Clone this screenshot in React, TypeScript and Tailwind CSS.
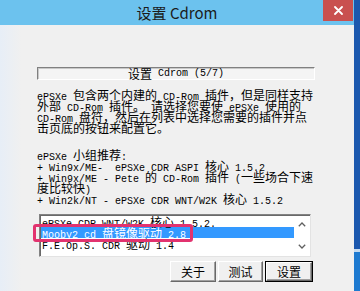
import React from 'react';

const cjk = "font-['Noto_Sans_CJK_SC',sans-serif]";
const mono = "font-['Liberation_Mono','Noto_Sans_CJK_SC',monospace]";

// SimSun-like mix: half-width latin (6px) next to full-width hanzi (12px)
function Mixed({ text }: { text: string }) {
  const parts = text.split(/([ -~]+)/).filter(Boolean);
  return (
    <>
      {parts.map((p, i) =>
        /^[ -~]+$/.test(p) ? (
          <span key={i} className={`${mono} text-[10px]`}>
            {p}
          </span>
        ) : (
          <span key={i} className={`${cjk} text-[12px]`}>
            {p}
          </span>
        )
      )}
    </>
  );
}

const intro = [
  'ePSXe 包含两个内建的 CD-Rom 插件，但是同样支持',
  '外部 CD-Rom 插件。 请选择您要使 ePSXe 使用的',
  'CD-Rom 盘符，然后在列表中选择您需要的插件并点',
  '击页底的按钮来配置它。',
];

const recommend = [
  'ePSXe 小组推荐:',
  '+ Win9x/ME-  ePSXe CDR ASPI 核心 1.5.2',
  '+ Win9x/ME - Pete 的 CD-Rom 插件 (一些场合下速',
  '度比较快)',
  '+ Win2k/NT - ePSXe CDR WNT/W2K 核心 1.5.2',
];

const plugins = ['ePSXe CDR WNT/W2K 核心 1.5.2.', 'Mooby2 cd 盘镜像驱动 2.8', 'F.E.Op.S. CDR 驱动 1.4'];

function Line({ text }: { text: string }) {
  return (
    <div className="h-[11px] leading-[11px] whitespace-pre text-black">
      <Mixed text={text} />
    </div>
  );
}

function Button({ label, primary, width }: { label: string; primary?: boolean; width: string }) {
  const inner = (
    <div
      className={`flex h-full items-center justify-center border border-t-white border-l-white border-r-[#696969] border-b-[#696969] bg-[#f0f0f0] shadow-[inset_-1px_-1px_0_#a0a0a0] ${cjk} text-[12px] text-black`}
    >
      {label}
    </div>
  );
  if (primary) {
    return <div className={`h-[21px] ${width} border border-black`}>{inner}</div>;
  }
  return <div className={`h-[21px] ${width}`}>{inner}</div>;
}

export default function App() {
  return (
    <div className="flex h-[291px] w-[360px] overflow-hidden bg-[#f0f0f0]">
      <div className="flex w-[354px] flex-col">
        <div className="relative flex h-[25px] items-center justify-center bg-[#6cc2ee]">
          <span className={`${cjk} text-[15px] leading-none text-[#1b1b1b]`}>设置 Cdrom</span>
          <div className="absolute top-0 right-[1px] flex h-[21px] w-[30px] items-center justify-center bg-[#c9504f]">
            <svg width="9" height="9" viewBox="0 0 9 9">
              <path d="M1 1L8 8M8 1L1 8" stroke="#fff" strokeWidth="1.8" strokeLinecap="round" />
            </svg>
          </div>
        </div>

        <div className="flex flex-1 flex-col bg-linear-to-r from-[#e7eef7] to-[#f0f0f0] to-6% pl-[37px]">
          <div className="mt-[42px] flex h-[13px] w-[278px] items-center justify-center border border-t-[#808080] border-l-[#808080] border-r-white border-b-white bg-[#f4f4f4] shadow-[inset_1px_1px_0_#c8c8c8] whitespace-pre leading-[11px]">
            <Mixed text="设置 Cdrom (5/7)" />
          </div>

          <div className="mt-[9px]">
            {intro.map((t) => (
              <Line key={t} text={t} />
            ))}
          </div>

          <div className="mt-[16px]">
            {recommend.map((t) => (
              <Line key={t} text={t} />
            ))}
          </div>

          <div className="relative mt-[10px] ml-[2px] flex h-[43px] w-[272px] border border-t-[#828282] border-l-[#828282] border-r-[#e3e3e3] border-b-[#e3e3e3] bg-white shadow-[inset_1px_1px_0_#696969]">
            <div className="flex-1 overflow-hidden pt-[1px] pl-[1px]">
              {plugins.map((p, i) => (
                <div
                  key={p}
                  className={`h-[11px] pl-[1px] leading-[11px] whitespace-pre ${
                    i === 1 ? 'bg-[#3399ff] text-white' : 'text-black'
                  }`}
                >
                  <Mixed text={p} />
                </div>
              ))}
            </div>
            <div className="flex w-[16px] flex-col items-center justify-between py-[7px] pr-[1px]">
              <svg width="8" height="5" viewBox="0 0 8 5">
                <path d="M0.8 4.2L4 1L7.2 4.2" fill="none" stroke="#606060" strokeWidth="1.3" />
              </svg>
              <svg width="8" height="5" viewBox="0 0 8 5">
                <path d="M0.8 0.8L4 4L7.2 0.8" fill="none" stroke="#606060" strokeWidth="1.3" />
              </svg>
            </div>
            <div className="absolute top-[9px] left-[-7px] h-[18px] w-[160px] rounded-[3px] border-[3px] border-[#e2336f]" />
          </div>

          <div className="mt-[4px] flex justify-end gap-[2px] pr-[41px]">
            <Button label="关于" width="w-[46px]" />
            <Button label="测试" width="w-[45px]" />
            <Button label="设置" width="w-[48px]" primary />
          </div>
        </div>
      </div>

      <div className="flex w-[6px] flex-col">
        <div className="h-[249px] bg-[#1b58ae]" />
        <div className="h-[3px] bg-[#c6dbf0]" />
        <div className="flex-1 bg-[#1e7ad0]" />
      </div>
    </div>
  );
}
